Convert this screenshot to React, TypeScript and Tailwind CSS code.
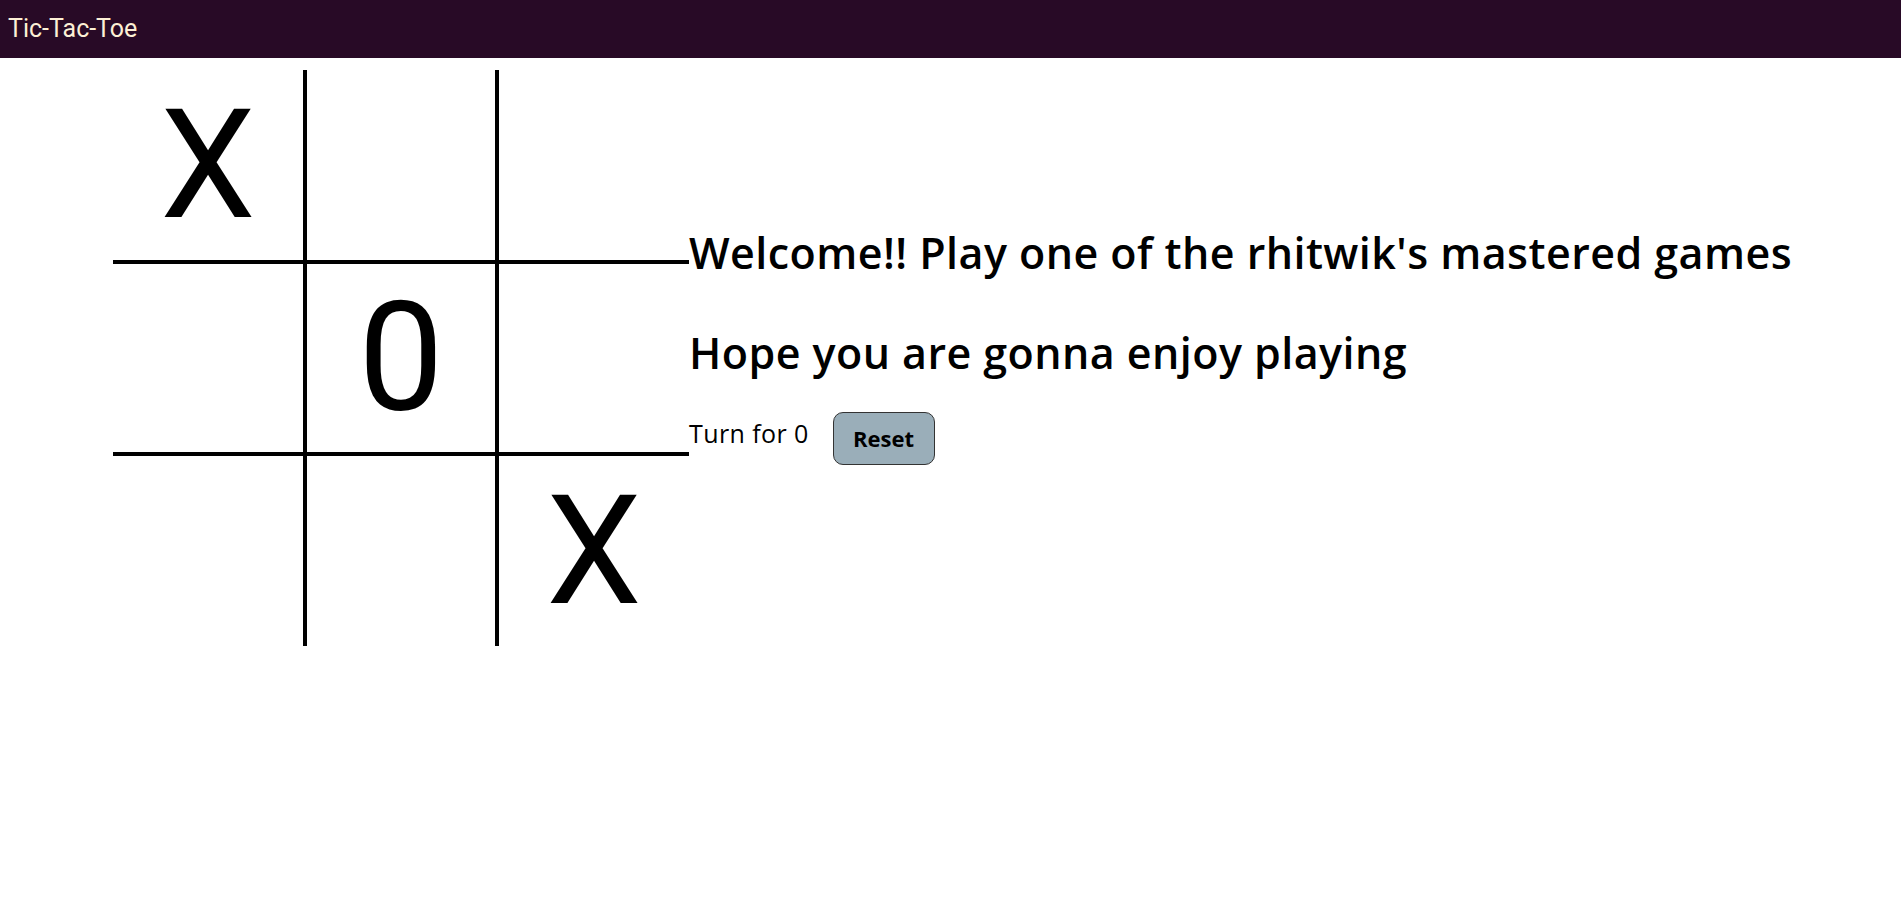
import { useState } from "react";

type Mark = "X" | "0" | "";

const cellBorders = [
  "border-r-2 border-b-2",
  "border-l-2 border-r-2 border-b-2",
  "border-l-2 border-b-2",
  "border-t-2 border-r-2 border-b-2",
  "border-2",
  "border-t-2 border-l-2 border-b-2",
  "border-t-2 border-r-2",
  "border-t-2 border-l-2 border-r-2",
  "border-t-2 border-l-2",
];

export default function App() {
  const [board, setBoard] = useState<Mark[]>(["X", "", "", "", "0", "", "", "", "X"]);
  const [turn, setTurn] = useState<"X" | "0">("0");

  function play(i: number) {
    if (board[i]) return;
    const next = [...board];
    next[i] = turn;
    setBoard(next);
    setTurn(turn === "X" ? "0" : "X");
  }

  function reset() {
    setBoard(["", "", "", "", "", "", "", "", ""]);
    setTurn("X");
  }

  return (
    <div className="min-h-screen bg-white font-['Roboto',sans-serif]">
      <header className="flex h-[58px] items-center bg-[#280a26] px-2">
        <span className="text-[25px] text-[#fdf0d5]">Tic-Tac-Toe</span>
      </header>

      <main className="flex items-start pl-[113px]">
        <div className="mt-[12px] grid w-[576px] grid-cols-3">
          {board.map((mark, i) => (
            <div
              key={i}
              onClick={() => play(i)}
              className={`flex h-[192px] w-[192px] cursor-pointer items-center justify-center border-black ${cellBorders[i]}`}
            >
              <span className="text-[152px] leading-none text-black">{mark}</span>
            </div>
          ))}
        </div>

        <section className="flex flex-col pt-[174px] font-['Open_Sans',sans-serif] text-black">
          <h1 className="text-[43px] font-semibold leading-[42px] tracking-[0.45px]">
            Welcome!! Play one of the rhitwik's mastered games
          </h1>
          <h1 className="mt-[58px] text-[43px] font-semibold leading-[42px] tracking-[0.45px]">
            Hope you are gonna enjoy playing
          </h1>
          <div className="mt-[38px] flex items-start gap-[24px]">
            <p className="mt-[9px] text-[25px] leading-[25px] tracking-[0.4px]">Turn for {turn}</p>
            <button
              onClick={reset}
              className="flex h-[53px] w-[102px] items-center justify-center rounded-[10px] border border-[#333] bg-[#9aaeb9] text-[22px] font-bold"
            >
              Reset
            </button>
          </div>
        </section>
      </main>
    </div>
  );
}
